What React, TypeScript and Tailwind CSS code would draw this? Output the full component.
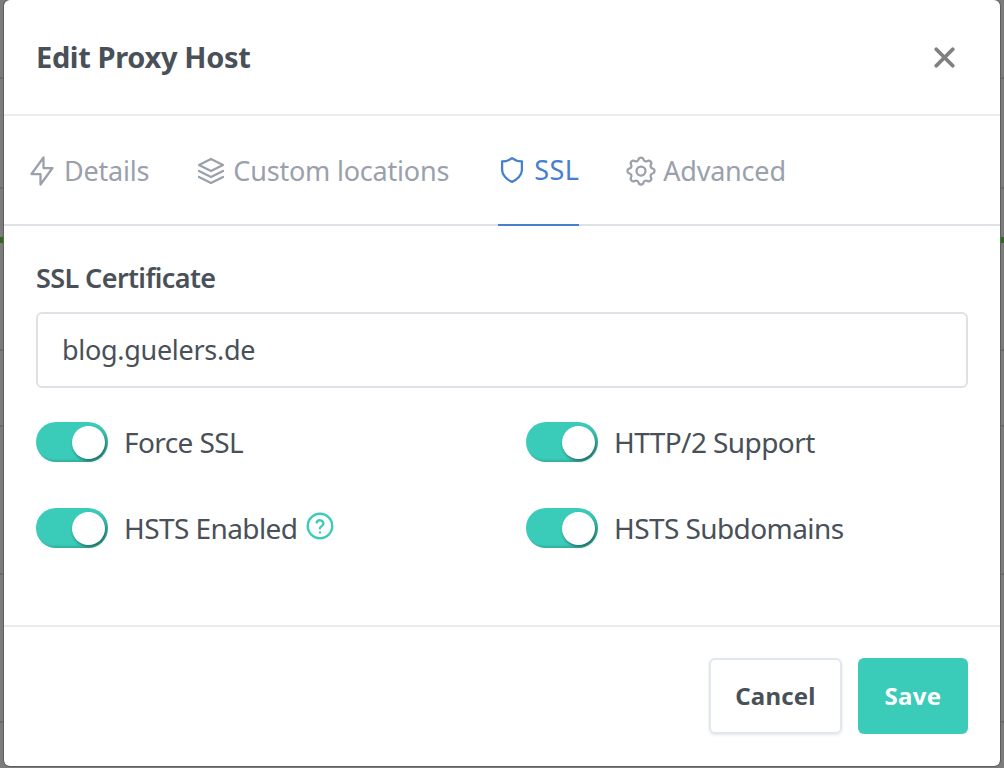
import type { ReactNode } from "react";
import { X } from "lucide-react";

function TablerIcon({ children }: { children: ReactNode }) {
  return (
    <svg className="-ml-[4px] shrink-0" width="36" height="36" viewBox="0 0 24 24" fill="none" stroke="currentColor" strokeWidth="1.5" strokeLinecap="round" strokeLinejoin="round">
      {children}
    </svg>
  );
}

function Toggle({ label, help }: { label: string; help?: boolean }) {
  return (
    <div className="flex items-center h-[40px]">
      <span className="relative block w-[72px] h-[40px] rounded-full bg-[#3bcbb9] shadow-[inset_-2px_-2px_2px_rgba(0,0,0,0.14)]">
        <span className="absolute right-[3px] top-[4px] w-[33px] h-[33px] rounded-full bg-white shadow-[1px_2px_3px_rgba(0,0,0,0.4)]" />
      </span>
      <span className="ml-[16px] pb-[1px] text-[28px] tracking-[-0.58px] text-[#495057] leading-[40px]">{label}</span>
      {help && (
        <svg className="ml-[9px] -mt-[5px]" width="28" height="28" viewBox="0 0 24 24" fill="none" stroke="#3bcbb9" strokeWidth="2" strokeLinecap="round" strokeLinejoin="round">
          <circle cx="12" cy="12" r="10.5" />
          <path d="M9.1 9a3 3 0 0 1 5.8 1c0 2-3 2.6-3 4" />
          <path d="M12 17.5h.01" />
        </svg>
      )}
    </div>
  );
}

function Tab({ icon, label, active }: { icon: ReactNode; label: string; active?: boolean }) {
  return (
    <div className={`flex items-center gap-[4px] h-[110px] ${active ? "ml-[1px] text-[#467fcf] border-b-2 border-[#467fcf]" : "text-[#9aa0ac]"}`}>
      {icon}
      <span className={`text-[27px] ${active ? "tracking-[0.4px]" : "tracking-[-0.2px]"}`}>{label}</span>
    </div>
  );
}

export default function App() {
  return (
    <div className="w-[1004px] h-[768px] bg-[#7c7c7c] bg-[linear-gradient(to_bottom,transparent_77px,#6c6c6c_77px,#6c6c6c_79px,transparent_79px,transparent_187px,#6c6c6c_187px,#6c6c6c_189px,transparent_189px,transparent_237px,#2f6b16_237px,#2f6b16_243px,transparent_243px,transparent_349px,#6c6c6c_349px,#6c6c6c_351px,transparent_351px,transparent_425px,#6c6c6c_425px,#6c6c6c_427px,transparent_427px,transparent_573px,#6c6c6c_573px,#6c6c6c_575px,transparent_575px,transparent_721px,#6c6c6c_721px,#6c6c6c_723px,transparent_723px)] px-[4px] pb-[2px] font-['Noto_Sans',sans-serif] overflow-hidden">
      <div className="h-full bg-white rounded-[6px] flex flex-col shadow-[0_0_0_1px_#5f5f5f]">
        <div className="h-[116px] shrink-0 border-b-2 border-[#e9ecef] flex items-center justify-between pl-[32px] pr-[39px]">
          <h1 className="text-[29px] font-bold tracking-[-0.35px] text-[#495057]">Edit Proxy Host</h1>
          <X size={33} className="text-[#808080]" strokeWidth={2.8} />
        </div>
        <div className="h-[110px] shrink-0 border-b-2 border-[#dee2e6] flex pl-[24px] gap-[48px]">
          <Tab
            label="Details"
            icon={
              <TablerIcon>
                <polyline points="13 3 13 10 19 10 11 21 11 14 5 14 13 3" />
              </TablerIcon>
            }
          />
          <Tab
            label="Custom locations"
            icon={
              <TablerIcon>
                <polygon points="12 4 4 8 12 12 20 8 12 4" />
                <polyline points="4 12 12 16 20 12" />
                <polyline points="4 16 12 20 20 16" />
              </TablerIcon>
            }
          />
          <Tab
            label="SSL"
            active
            icon={
              <TablerIcon>
                <path d="M12 4.1C14 5.6 16.3 6.3 18.6 6.3V12C18.6 15.5 15.5 18.5 12 19.9C8.5 18.5 5.4 15.5 5.4 12V6.3C7.7 6.3 10 5.6 12 4.1Z" />
              </TablerIcon>
            }
          />
          <Tab
            label="Advanced"
            icon={
              <TablerIcon>
                <path d="M10.325 4.317c.426 -1.756 2.924 -1.756 3.35 0a1.724 1.724 0 0 0 2.573 1.066c1.543 -.94 3.31 .826 2.37 2.37a1.724 1.724 0 0 0 1.065 2.572c1.756 .426 1.756 2.924 0 3.35a1.724 1.724 0 0 0 -1.066 2.573c.94 1.543 -.826 3.31 -2.37 2.37a1.724 1.724 0 0 0 -2.572 1.065c-.426 1.756 -2.924 1.756 -3.35 0a1.724 1.724 0 0 0 -2.573 -1.066c-1.543 .94 -3.31 -.826 -2.37 -2.37a1.724 1.724 0 0 0 -1.065 -2.572c-1.756 -.426 -1.756 -2.924 0 -3.35a1.724 1.724 0 0 0 1.066 -2.573c-.94 -1.543 .826 -3.31 2.37 -2.37c1 .608 2.296 .07 2.572 -1.065z" />
                <circle cx="12" cy="12" r="3" />
              </TablerIcon>
            }
          />
        </div>
        <div className="flex-1 px-[32px] pt-[34px]">
          <label className="block text-[27px] font-semibold tracking-[-0.6px] text-[#495057] leading-[36px]">SSL Certificate</label>
          <div className="mt-[16px] h-[76px] border-2 border-[#dee2e6] rounded-[6px] flex items-center px-[24px] text-[27px] tracking-[-0.3px] text-[#495057]">blog.guelers.de</div>
          <div className="mt-[34px] grid grid-cols-[490px_1fr] gap-y-[46px]">
            <Toggle label="Force SSL" />
            <Toggle label="HTTP/2 Support" />
            <Toggle label="HSTS Enabled" help />
            <Toggle label="HSTS Subdomains" />
          </div>
        </div>
        <div className="h-[141px] shrink-0 border-t-2 border-[#e9ecef] flex justify-end items-start gap-[16px] pt-[31px] pr-[32px]">
          <button className="w-[133px] h-[76px] pb-[1px] rounded-[6px] border-2 border-[#e2e6ee] shadow-[0_1px_3px_rgba(0,0,0,0.1)] text-[24px] font-bold tracking-[0.2px] text-[#495057]">Cancel</button>
          <button className="w-[110px] h-[76px] pb-[1px] rounded-[6px] bg-[#3bcbb9] text-[24px] font-bold tracking-[0.3px] text-white">Save</button>
        </div>
      </div>
    </div>
  );
}
